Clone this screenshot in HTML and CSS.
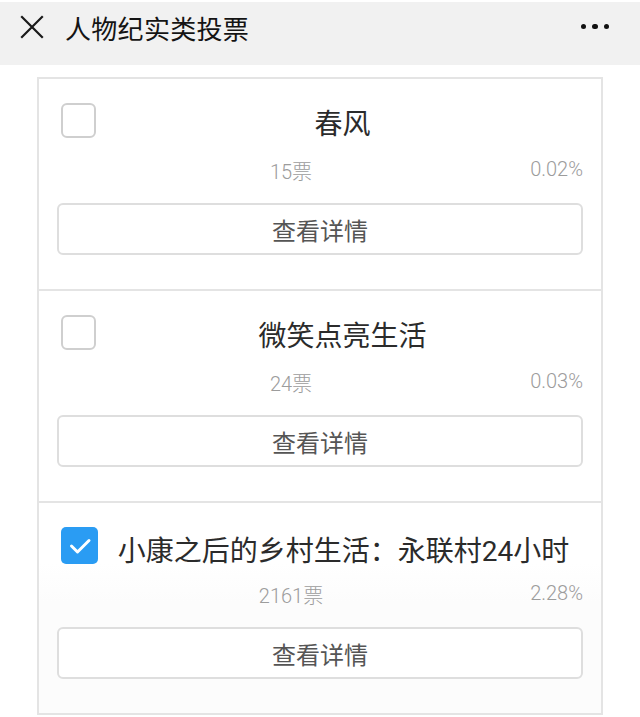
FILE: index.html
```html
<!DOCTYPE html>
<html lang="zh">
<head>
<meta charset="utf-8">
<title>人物纪实类投票</title>
<link rel="stylesheet" href="styles.css">
</head>
<body>
<header class="topbar">
  <svg class="close-icon" width="24" height="24" viewBox="0 0 24 24"><path d="M2 2 L22 22 M22 2 L2 22" stroke="#1a1a1a" stroke-width="2.2" fill="none" stroke-linecap="square"/></svg>
  <h1 class="topbar-title">人物纪实类投票</h1>
  <div class="more"><span class="dot"></span><span class="dot"></span><span class="dot"></span></div>
</header>
<main class="list">
  <section class="item">
    <div class="head">
      <span class="checkbox"></span>
      <div class="name">春风</div>
    </div>
    <div class="stats"><span class="votes">15票</span><span class="pct">0.02%</span></div>
    <button class="detail">查看详情</button>
  </section>
  <section class="item">
    <div class="head">
      <span class="checkbox"></span>
      <div class="name">微笑点亮生活</div>
    </div>
    <div class="stats"><span class="votes">24票</span><span class="pct">0.03%</span></div>
    <button class="detail">查看详情</button>
  </section>
  <section class="item selected">
    <div class="head">
      <span class="checkbox checked"><svg width="36" height="36" viewBox="0 0 36 36"><path d="M9.5 18 L15.5 24 L27 12.5" stroke="#fff" stroke-width="3" fill="none" stroke-linecap="round" stroke-linejoin="round"/></svg></span>
      <div class="name">小康之后的乡村生活：永联村24小时</div>
    </div>
    <div class="stats"><span class="votes">2161票</span><span class="pct">2.28%</span></div>
    <button class="detail">查看详情</button>
  </section>
</main>
</body>
</html>
```
FILE: styles.css
```css
html, body {
  margin: 0;
  padding: 0;
  background: #fff;
}
body {
  font-family: Roboto, "Noto Sans CJK SC", sans-serif;
  width: 640px;
  height: 717px;
  overflow: hidden;
}
.topbar {
  margin-top: 2px;
  height: 63px;
  background: #f1f1f1;
  display: flex;
  align-items: center;
  padding: 0 0 0 20px;
  box-sizing: border-box;
}
.close-icon {
  flex: none;
  margin-top: -13px;
}
.topbar-title {
  margin: -13px 0 0 21px;
  font-size: 26px;
  font-weight: 400;
  color: #141414;
  flex: 1;
  letter-spacing: 0.3px;
}
.more {
  display: flex;
  gap: 6px;
  margin-right: 31px;
  margin-top: -14px;
}
.dot {
  width: 5.5px;
  height: 5.5px;
  border-radius: 50%;
  background: #111;
}
.list {
  margin: 12px 37px 0 37px;
  border: 2px solid #e4e4e4;
  border-bottom: none;
}
.item {
  border-bottom: 2px solid #e4e4e4;
  padding: 24px 18px 34px 18px;
}
.head {
  display: flex;
  align-items: flex-start;
  height: 44px;
  padding-left: 4px;
}
.checkbox {
  flex: none;
  width: 35px;
  height: 35px;
  box-sizing: border-box;
  border: 2px solid #cfcfcf;
  border-radius: 6px;
  background: #fff;
  display: flex;
}
.checkbox.checked {
  width: 37px;
  height: 37px;
  border: none;
  background: #2a9cf3;
  border-radius: 5px;
  align-items: center;
  justify-content: center;
}
.name {
  flex: 1;
  text-align: center;
  font-size: 28px;
  line-height: 44px;
  color: #2b2b2b;
  margin-left: 6px;
  white-space: nowrap;
}
.item.selected .name {
  margin-top: 3px;
}
.stats {
  display: grid;
  grid-template-columns: 1fr 58px;
  margin-top: 10px;
  height: 30px;
  color: #9c9c9c;
  font-size: 20px;
  font-weight: 300;
}
.votes {
  text-align: center;
  line-height: 30px;
}
.pct {
  text-align: right;
  line-height: 24px;
}
.detail {
  display: block;
  width: 100%;
  height: 52px;
  margin-top: 16px;
  border: 2px solid #dedede;
  border-radius: 6px;
  background: #fff;
  font-family: Roboto, "Noto Sans CJK SC", sans-serif;
  font-size: 24px;
  color: #555;
  padding: 0;
}
.item.selected {
  background: linear-gradient(#fff, #fff 60px, #fcfcfc 100px);
}
```
